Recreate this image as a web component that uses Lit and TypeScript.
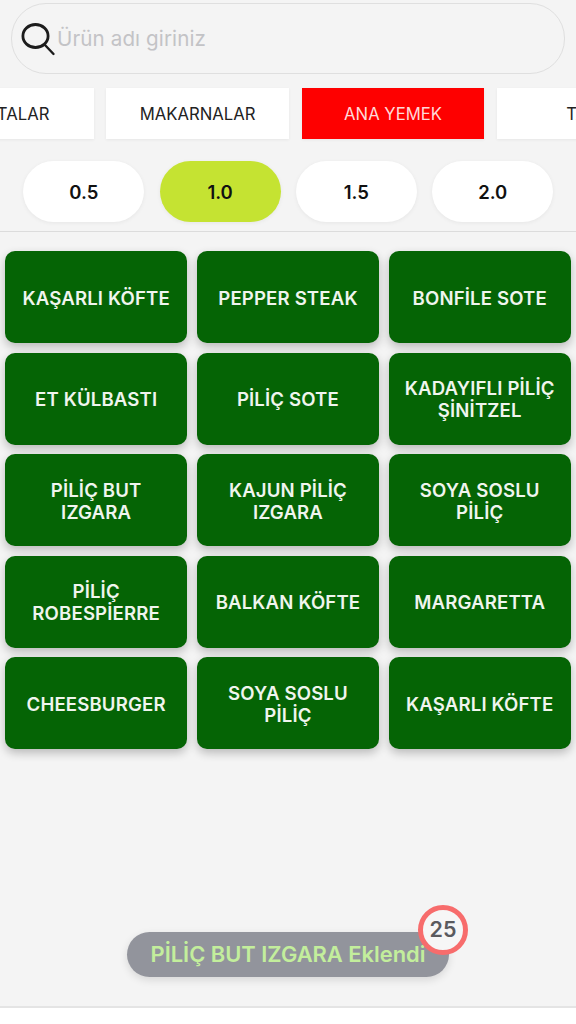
import { LitElement, html, css } from "lit";
import { customElement } from "lit/decorators.js";

const TABS = ["SALATALAR", "MAKARNALAR", "ANA YEMEK", "TATLI"];
const SIZES = ["0.5", "1.0", "1.5", "2.0"];
const ITEMS = [
  "KAŞARLI KÖFTE", "PEPPER STEAK", "BONFİLE SOTE",
  "ET KÜLBASTI", "PİLİÇ SOTE", "KADAYIFLI PİLİÇ ŞİNİTZEL",
  "PİLİÇ BUT IZGARA", "KAJUN PİLİÇ IZGARA", "SOYA SOSLU PİLİÇ",
  "PİLİÇ ROBESPİERRE", "BALKAN KÖFTE", "MARGARETTA",
  "CHEESBURGER", "SOYA SOSLU PİLİÇ", "KAŞARLI KÖFTE",
];

@customElement("app-root")
export class AppRoot extends LitElement {
  static styles = css`
    :host {
      display: flex;
      flex-direction: column;
      position: relative;
      width: 576px;
      height: 1024px;
      overflow: hidden;
      background: #f4f4f4;
      font-family: Inter, "Noto Sans", sans-serif;
      color: #111;
    }
    .search-wrap { padding: 3px 11px 0 11px; }
    .search {
      box-sizing: border-box;
      height: 71px;
      border: 1.5px solid #dfdfdf;
      border-radius: 35px;
      display: flex;
      align-items: center;
      padding: 0 0 0 8px;
      gap: 1px;
    }
    .search svg { display: block; flex: none; }
    .placeholder { font-size: 20.6px; color: #c3c3c6; letter-spacing: 0.1px; }
    .tabs {
      display: flex;
      gap: 12.9px;
      margin: 14px 0 0 -89px;
    }
    .tab {
      flex: none;
      width: 182.5px;
      height: 51px;
      background: #fff;
      display: flex;
      align-items: center;
      justify-content: center;
      font-size: 16.7px;
      color: #222;
      box-shadow: 0 1px 3px rgba(0, 0, 0, 0.06);
    }
    .tab.on { background: #fe0000; color: #ffd9d9; }
    .sizes {
      display: flex;
      gap: 15.3px;
      padding: 22px 0 9px 23.3px;
      border-bottom: 1.5px solid #dcdcdc;
    }
    .size {
      width: 121px;
      height: 61px;
      border-radius: 31px;
      background: #fff;
      display: flex;
      align-items: center;
      justify-content: center;
      font-size: 18.5px;
      font-weight: 600;
      color: #111;
      box-shadow: 0 1px 4px rgba(0, 0, 0, 0.06);
    }
    .size.on { background: #c5e332; }
    .grid {
      display: grid;
      grid-template-columns: repeat(3, 182.3px);
      grid-auto-rows: 92px;
      gap: 9.5px;
      padding: 19px 0 0 5px;
    }
    .item {
      box-sizing: border-box;
      border-radius: 10px;
      background: #056405;
      color: #f0f5ee;
      display: flex;
      align-items: center;
      justify-content: center;
      text-align: center;
      padding: 1px 12px 0;
      font-size: 18.6px;
      font-weight: 600;
      line-height: 22px;
      letter-spacing: 0.15px;
      box-shadow: 0 4px 10px rgba(0, 0, 0, 0.24);
    }
    .spacer { flex: 1; }
    .footer {
      height: 16px;
      background: #fff;
      border-top: 2px solid #e4e4e4;
    }
    .toast {
      position: absolute;
      left: 127px;
      top: 932px;
      box-sizing: border-box;
      width: 322px;
      height: 45px;
      padding-bottom: 2px;
      border-radius: 23px;
      background: #92949c;
      color: #c3ee9c;
      display: flex;
      align-items: center;
      justify-content: center;
      font-size: 21.9px;
      font-weight: 600;
      white-space: nowrap;
      box-shadow: 0 3px 8px rgba(0, 0, 0, 0.12);
    }
    .badge {
      position: absolute;
      left: 418px;
      top: 905px;
      box-sizing: border-box;
      width: 50px;
      height: 50px;
      padding-bottom: 2px;
      border-radius: 50%;
      border: 5px solid #f76c6c;
      background: #f6f6f6;
      color: #5a5a5e;
      display: flex;
      align-items: center;
      justify-content: center;
      font-size: 21.5px;
      font-weight: 600;
    }
  `;

  render() {
    return html`
      <div class="search-wrap">
        <div class="search">
          <svg width="36" height="36" viewBox="0 0 36 36" fill="none" stroke="#1c1c1c" stroke-linecap="round">
            <ellipse cx="15.5" cy="15" rx="12.6" ry="11.5" stroke-width="2.8"></ellipse>
            <path d="M24.5 23.5 L33.5 33" stroke-width="2.4"></path>
          </svg>
          <span class="placeholder">Ürün adı giriniz</span>
        </div>
      </div>
      <div class="tabs">
        ${TABS.map((t) => html`<div class="tab ${t === "ANA YEMEK" ? "on" : ""}">${t}</div>`)}
      </div>
      <div class="sizes">
        ${SIZES.map((s) => html`<div class="size ${s === "1.0" ? "on" : ""}">${s}</div>`)}
      </div>
      <div class="grid">
        ${ITEMS.map((i) => html`<div class="item"><span>${i}</span></div>`)}
      </div>
      <div class="spacer"></div>
      <div class="footer"></div>
      <div class="toast">PİLİÇ BUT IZGARA Eklendi</div>
      <div class="badge">25</div>
    `;
  }
}
